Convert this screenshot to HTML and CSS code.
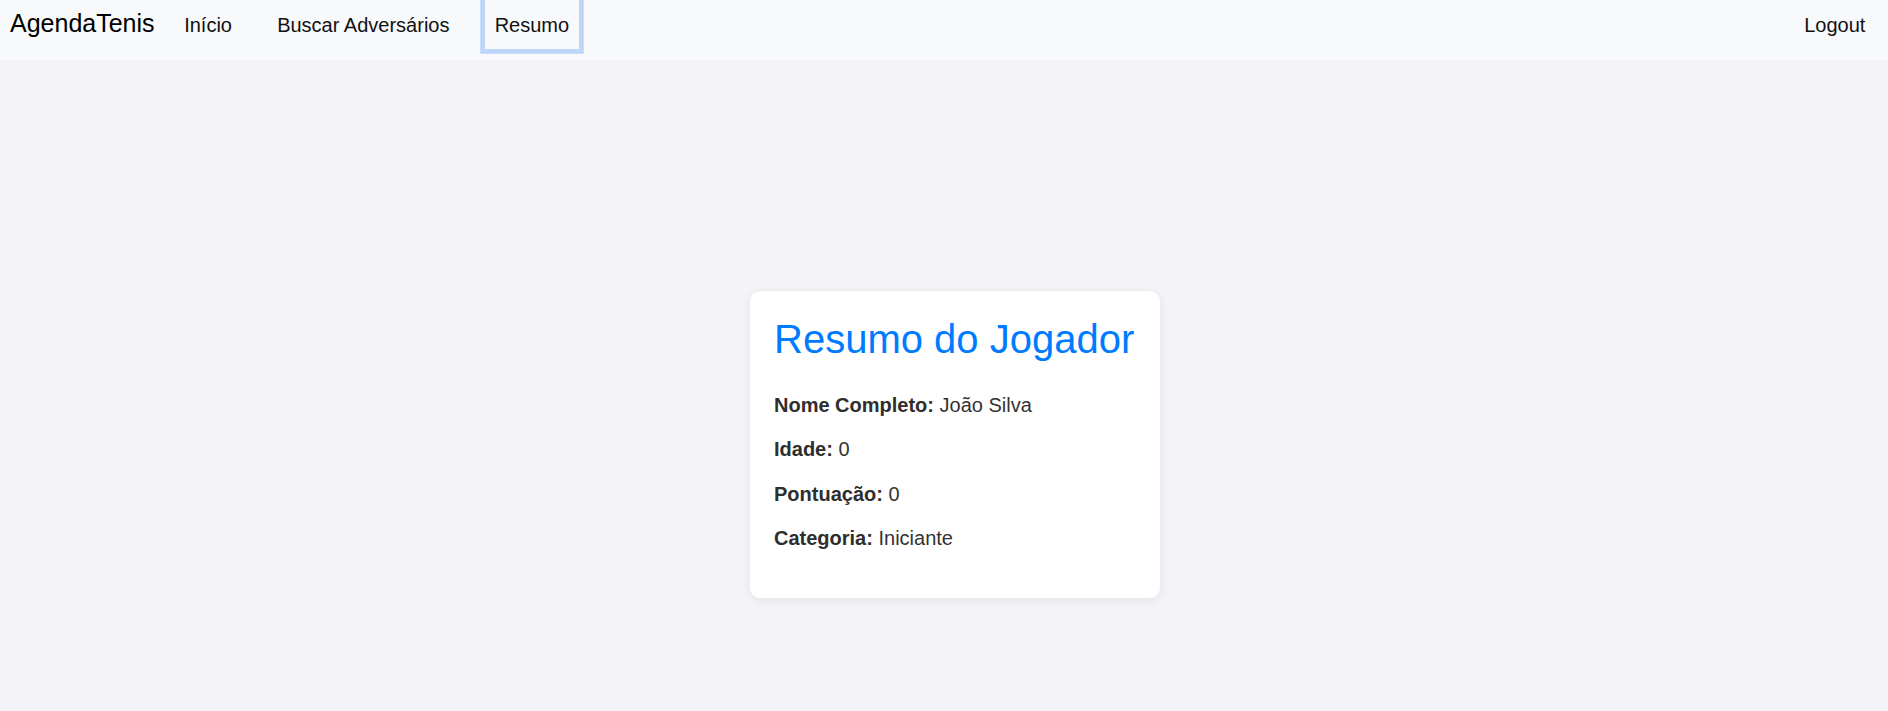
FILE: index.html
```html
<!DOCTYPE html>
<html lang="pt-BR">
<head>
<meta charset="utf-8">
<title>AgendaTenis - Resumo</title>
<link rel="stylesheet" href="styles.css">
</head>
<body>
<nav class="navbar">
  <a class="brand" href="#">AgendaTenis</a>
  <ul class="nav-list">
    <li><a class="nav-link" href="#">Início</a></li>
    <li><a class="nav-link" href="#">Buscar Adversários</a></li>
    <li><a class="nav-link focused" href="#">Resumo</a></li>
  </ul>
  <a class="nav-link logout" href="#">Logout</a>
</nav>
<main class="main">
  <section class="card">
    <h2 class="card-title">Resumo do Jogador</h2>
    <p class="row"><strong>Nome Completo:</strong> João Silva</p>
    <p class="row"><strong>Idade:</strong> 0</p>
    <p class="row"><strong>Pontuação:</strong> 0</p>
    <p class="row"><strong>Categoria:</strong> Iniciante</p>
  </section>
</main>
</body>
</html>
```

FILE: styles.css
```css
* { box-sizing: border-box; }

html, body {
  margin: 0;
  padding: 0;
}

body {
  font-family: "Liberation Sans", Arial, sans-serif;
  font-size: 20px;
  line-height: 30px;
  background: #f4f4f8;
  color: #333;
  height: 711px;
  overflow: hidden;
}

.navbar {
  display: flex;
  align-items: flex-start;
  height: 60px;
  padding: 0 13px 0 10px;
  background: #f8f9fa;
}

.brand {
  font-size: 25px;
  line-height: 37.5px;
  margin-top: 4.9px;
  margin-right: 20px;
  color: #000;
  text-decoration: none;
  white-space: nowrap;
}

.nav-list {
  display: flex;
  list-style: none;
  margin: 0;
  padding: 0;
  gap: 26px;
}

.nav-link {
  display: block;
  padding: 9.6px 9.6px;
  line-height: 30px;
  color: #111;
  text-decoration: none;
  white-space: nowrap;
}

.nav-link.focused {
  box-shadow: 0 0 0 4.8px rgba(13, 110, 253, 0.25);
}

.logout {
  margin-left: auto;
}

.main {
  display: flex;
  justify-content: center;
  padding: 231px 0 0 22px;
}

.card {
  width: 410px;
  padding: 24px 24px 30.5px 24px;
  background: #fff;
  border-radius: 10px;
  box-shadow: 0 2px 10px rgba(0, 0, 0, 0.08);
}

.card-title {
  margin: 0 0 27px 0;
  font-size: 40px;
  line-height: 48px;
  font-weight: 400;
  color: #007bff;
  white-space: nowrap;
}

.row {
  margin: 0 0 14.4px 0;
  color: #333;
}

.row strong {
  font-weight: 700;
  color: #2e2e2e;
}
```
